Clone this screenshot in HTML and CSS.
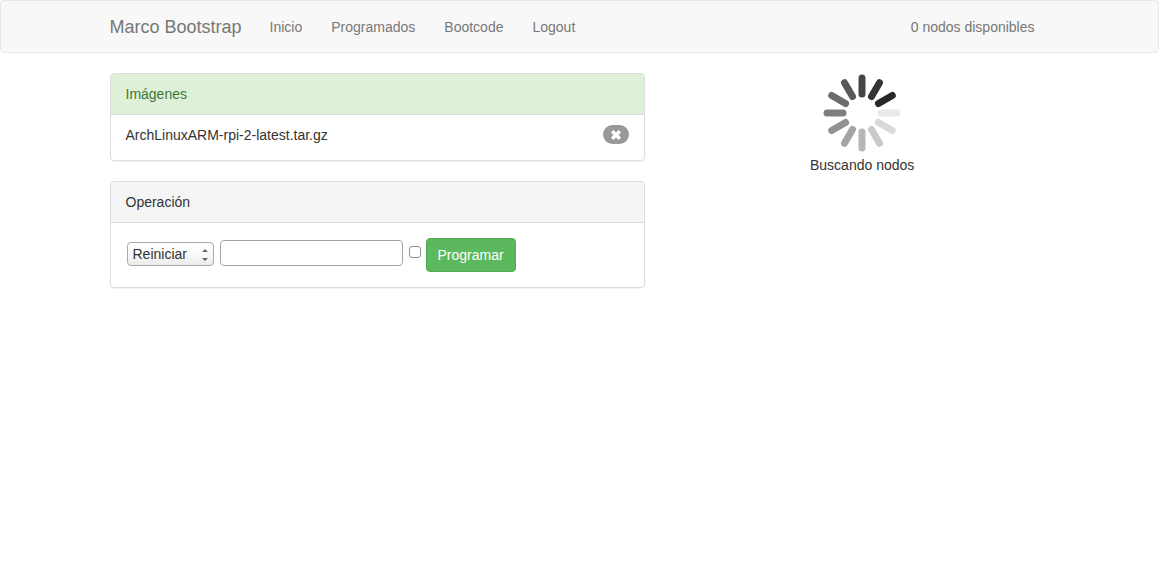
FILE: index.html
```html
<!DOCTYPE html>
<html lang="es">
<head>
  <meta charset="utf-8">
  <meta name="viewport" content="width=device-width, initial-scale=1">
  <title>Marco Bootstrap</title>
  <link rel="stylesheet" href="styles.css">
</head>
<body>
  <nav class="navbar">
    <div class="container navbar-row">
      <a class="brand" href="#">Marco Bootstrap</a>
      <ul class="nav">
        <li><a href="#">Inicio</a></li>
        <li><a href="#">Programados</a></li>
        <li><a href="#">Bootcode</a></li>
        <li><a href="#">Logout</a></li>
      </ul>
      <p class="navbar-text">0 nodos disponibles</p>
    </div>
  </nav>

  <main class="container columns">
    <div class="column-main">
      <section class="panel">
        <h2 class="panel-heading panel-heading-success">Imágenes</h2>
        <ul class="images">
          <li class="image-item">
            <span>ArchLinuxARM-rpi-2-latest.tar.gz</span>
            <button class="badge" type="button" aria-label="Eliminar">
              <svg width="12" height="12" viewBox="0 0 12 12"><path d="M2.2 2.2l7.6 7.6M9.8 2.2l-7.6 7.6" stroke="#fff" stroke-width="3.6"/></svg>
            </button>
          </li>
        </ul>
      </section>

      <section class="panel">
        <h2 class="panel-heading">Operación</h2>
        <form class="operation">
          <span class="select-wrap">
            <select class="select" aria-label="Operación">
              <option>Reiniciar</option>
            </select>
            <svg class="select-arrows" width="6" height="14" viewBox="0 0 6 14"><path d="M0 4l3-3 3 3zM0 10h6l-3 3z" fill="#666"/></svg>
          </span>
          <input class="text-input" type="text" aria-label="Fecha">
          <input class="checkbox" type="checkbox" aria-label="Activar">
          <button class="submit" type="submit">Programar</button>
        </form>
      </section>
    </div>

    <aside class="column-side">
      <svg class="spinner" width="80" height="80" viewBox="-40 -40 80 80" stroke-width="7" stroke-linecap="round">
        <path d="M19 0H35" stroke="#e9e9e9"/>
        <path d="M19 0H35" stroke="#dadada" transform="rotate(30)"/>
        <path d="M19 0H35" stroke="#c9c9c9" transform="rotate(60)"/>
        <path d="M19 0H35" stroke="#b7b7b7" transform="rotate(90)"/>
        <path d="M19 0H35" stroke="#a5a5a5" transform="rotate(120)"/>
        <path d="M19 0H35" stroke="#929292" transform="rotate(150)"/>
        <path d="M19 0H35" stroke="#7f7f7f" transform="rotate(180)"/>
        <path d="M19 0H35" stroke="#6c6c6c" transform="rotate(210)"/>
        <path d="M19 0H35" stroke="#585858" transform="rotate(240)"/>
        <path d="M19 0H35" stroke="#464646" transform="rotate(270)"/>
        <path d="M19 0H35" stroke="#353535" transform="rotate(300)"/>
        <path d="M19 0H35" stroke="#282828" transform="rotate(330)"/>
      </svg>
      <p class="status">Buscando nodos</p>
    </aside>
  </main>
</body>
</html>
```
FILE: styles.css
```css
* {
  box-sizing: border-box;
}

body {
  margin: 0;
  background: #fff;
  color: #333;
  font: 14px/20px "Liberation Sans", Arial, sans-serif;
}

a {
  color: inherit;
  text-decoration: none;
}

button,
input,
select {
  margin: 0;
  font: inherit;
  color: inherit;
}

.container {
  max-width: 970px;
  margin: 0 auto;
  padding: 0 15px;
}

.navbar {
  margin-bottom: 20px;
  background: #f8f8f8;
  border: 1px solid #e7e7e7;
  border-radius: 4px;
  color: #777;
}

.navbar-row {
  display: flex;
  align-items: center;
  padding-right: 30px;
}

.brand {
  margin-right: 14px;
  font-size: 18px;
}

.nav {
  display: flex;
  margin: 0;
  padding: 0;
  list-style: none;
}

.nav a {
  display: block;
  padding: 16px 15px 15px 14px;
}

.navbar-text {
  margin: 0 0 0 auto;
}

.columns {
  display: grid;
  grid-template-columns: 7fr 5fr;
}

.column-main {
  padding-right: 13px;
}

.column-side {
  display: flex;
  flex-direction: column;
  align-items: center;
  padding-left: 17px;
}

.spinner {
  fill: none;
}

.status {
  margin: 2px 0 0;
}

.panel {
  margin-bottom: 20px;
  background: #fff;
  border: 1px solid #ddd;
  border-radius: 4px;
  box-shadow: 0 1px 1px rgba(0, 0, 0, 0.05);
}

.panel-heading {
  margin: 0;
  padding: 10px 15px;
  border-bottom: 1px solid #ddd;
  border-radius: 3px 3px 0 0;
  background: #f5f5f5;
  font-size: 14px;
  font-weight: normal;
}

.panel-heading-success {
  background: #dff0d8;
  color: #3c763d;
}

.images {
  margin: 0;
  padding: 0;
  list-style: none;
}

.image-item {
  display: flex;
  align-items: flex-start;
  justify-content: space-between;
  padding: 10px 15px 15px;
}

.badge {
  display: flex;
  align-items: center;
  justify-content: center;
  width: 26px;
  height: 19px;
  padding: 0;
  border: 0;
  border-radius: 10px;
  background: #999;
}

.operation {
  display: flex;
  align-items: center;
  padding: 15px 16px;
}

.select-wrap {
  position: relative;
  margin: 0 6px 2px 0;
}

.select {
  display: block;
  width: 87px;
  height: 24px;
  padding: 0 5px;
  appearance: none;
  border: 1px solid #aaa;
  border-radius: 4px;
  background: linear-gradient(#fff, #fafafa 50%, #ebebea);
}

.select-arrows {
  position: absolute;
  top: 6px;
  right: 6px;
  pointer-events: none;
}

.text-input {
  width: 183px;
  height: 26px;
  margin: 0 6px 4px 0;
  padding: 2px 4px;
  border: 1px solid #a8a4a0;
  border-radius: 4px;
  background: #fff;
}

.checkbox {
  width: 12px;
  height: 12px;
  margin: 0 5px 6px 0;
  appearance: none;
  border: 1px solid #8e8e8e;
  border-radius: 3px;
  background: #fff;
}

.checkbox:checked {
  background: #5cb85c;
}

.submit {
  padding: 6px 11px;
  border: 1px solid #4cae4c;
  border-radius: 4px;
  background: #5cb85c;
  color: #fff;
}
```
